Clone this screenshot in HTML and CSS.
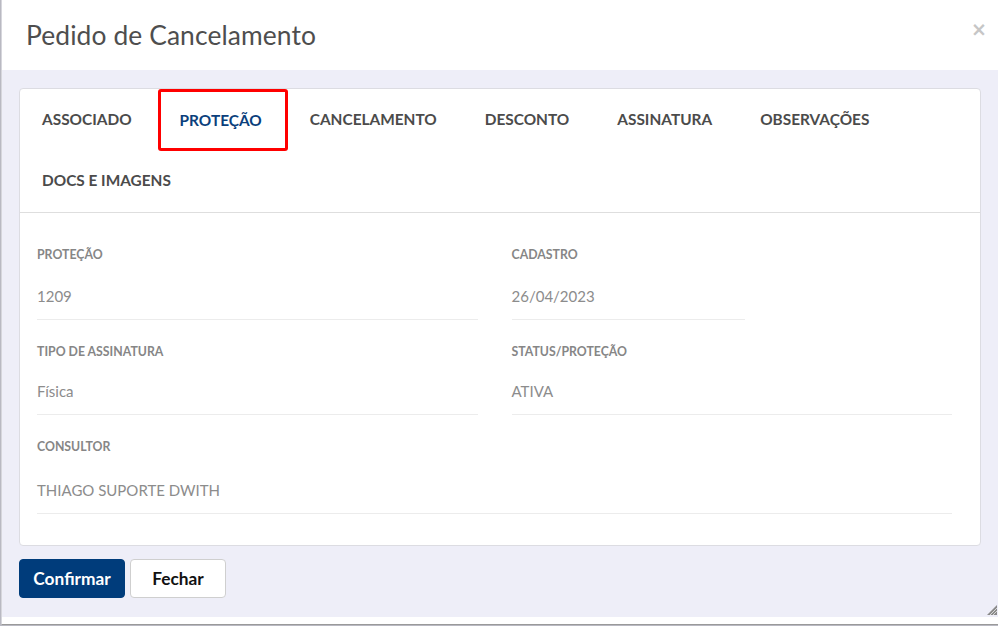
FILE: index.html
```html
<!DOCTYPE html>
<html lang="pt-BR">
<head>
<meta charset="utf-8">
<title>Pedido de Cancelamento</title>
<link rel="stylesheet" href="styles.css">
</head>
<body>
<div class="modal">
  <header class="modal-header">
    <h1 class="modal-title">Pedido de Cancelamento</h1>
    <button class="modal-close" type="button" aria-label="Fechar">×</button>
  </header>

  <div class="modal-body">
    <section class="card">
      <nav class="tabs">
        <a class="tab">ASSOCIADO</a>
        <a class="tab tab-active">PROTEÇÃO</a>
        <a class="tab">CANCELAMENTO</a>
        <a class="tab">DESCONTO</a>
        <a class="tab">ASSINATURA</a>
        <a class="tab">OBSERVAÇÕES</a>
        <a class="tab">DOCS E IMAGENS</a>
      </nav>

      <div class="fields">
        <div class="field">
          <div class="field-label">PROTEÇÃO</div>
          <div class="field-value">1209</div>
        </div>
        <div class="field field-short">
          <div class="field-label">CADASTRO</div>
          <div class="field-value">26/04/2023</div>
        </div>
        <div class="field">
          <div class="field-label">TIPO DE ASSINATURA</div>
          <div class="field-value field-value-tight">Física</div>
        </div>
        <div class="field">
          <div class="field-label">STATUS/PROTEÇÃO</div>
          <div class="field-value field-value-tight">ATIVA</div>
        </div>
        <div class="field field-wide">
          <div class="field-label">CONSULTOR</div>
          <div class="field-value">THIAGO SUPORTE DWITH</div>
        </div>
      </div>
    </section>

    <div class="actions">
      <button class="btn btn-primary" type="button">Confirmar</button>
      <button class="btn btn-default" type="button">Fechar</button>
    </div>

    <svg class="resize-grip" width="10" height="10" viewBox="0 0 10 10" aria-hidden="true">
      <path d="M10 0 L10 10 L0 10 Z" fill="#8a8a8a"/>
      <path d="M3 10 L10 3 M6 10 L10 6" stroke="#d8d8d8" stroke-width="1"/>
    </svg>
  </div>

  <div class="modal-footer-strip"></div>
</div>
</body>
</html>
```

FILE: styles.css
```css
html, body {
  margin: 0;
  padding: 0;
}

body {
  background: #b9b9c2;
  font-family: Lato, "Liberation Sans", sans-serif;
  width: 998px;
  height: 626px;
  overflow: hidden;
}

.modal {
  margin-left: 1px;
  height: 624px;
  display: flex;
  flex-direction: column;
  background: #fff;
  border-left: 1px solid #d6d6dc;
  border-bottom: 1px solid #9a9a9a;
}

/* header */
.modal-header {
  height: 70px;
  flex: none;
  display: flex;
  align-items: center;
  justify-content: space-between;
  padding: 0 11px 0 24px;
  background: #fff;
}

.modal-title {
  margin: 0;
  font-size: 26.4px;
  font-weight: 400;
  color: #4e4e4e;
  letter-spacing: 0.1px;
}

.modal-close {
  border: 0;
  background: none;
  padding: 0;
  font-family: "DejaVu Sans", sans-serif;
  font-size: 19px;
  font-weight: 700;
  line-height: 1;
  color: #c6c6c6;
  margin-top: -11px;
}

/* body */
.modal-body {
  flex: 1;
  position: relative;
  background: #eeeef8;
  padding: 18px 17px 0 17px;
}

.card {
  background: #fff;
  border: 1px solid #dcdce2;
  border-radius: 4px;
}

.tabs {
  display: flex;
  flex-wrap: wrap;
  border-bottom: 1px solid #dedede;
}

.tab {
  height: 61.5px;
  display: flex;
  align-items: center;
  padding: 0 26px 0 22px;
  font-size: 15.4px;
  font-weight: 700;
  color: #4b4b4b;
  border-radius: 3px;
  cursor: pointer;
  position: relative;
  top: -1px;
}

.tab-active {
  color: #0b3f7c;
  box-shadow: inset 0 0 0 3px #ff0000;
  top: 0;
}

.fields {
  display: grid;
  grid-template-columns: 1fr 1fr;
  column-gap: 34px;
  row-gap: 24px;
  padding: 34px 28px 31px 17px;
}

.field {
  border-bottom: 1px solid #ececec;
  padding-bottom: 13px;
}

.field-short {
  width: 233px;
}

.field-wide {
  grid-column: 1 / span 2;
}

.field-label {
  font-size: 12.3px;
  line-height: 16px;
  font-weight: 700;
  color: #868686;
  margin-bottom: 23px;
}

.field-wide .field-label {
  margin-bottom: 25px;
}

.field-value {
  font-size: 15px;
  line-height: 20px;
  color: #8c8c8c;
}

.field-value-tight {
  margin-top: -2px;
}

/* buttons */
.actions {
  display: flex;
  gap: 5px;
  margin-top: 13px;
}

.btn {
  height: 39px;
  border-radius: 4px;
  font-family: Lato, "Liberation Sans", sans-serif;
  font-size: 17.3px;
  font-weight: 700;
  cursor: pointer;
  padding: 0;
}

.btn-primary {
  width: 106px;
  background: #003c7b;
  border: 1px solid #003c7b;
  color: #fff;
}

.btn-default {
  width: 96px;
  background: #fff;
  border: 1px solid #cfcfcf;
  color: #111;
}

.resize-grip {
  position: absolute;
  right: 1px;
  bottom: 2px;
}

.modal-footer-strip {
  height: 7px;
  flex: none;
  background: #fff;
}
```
